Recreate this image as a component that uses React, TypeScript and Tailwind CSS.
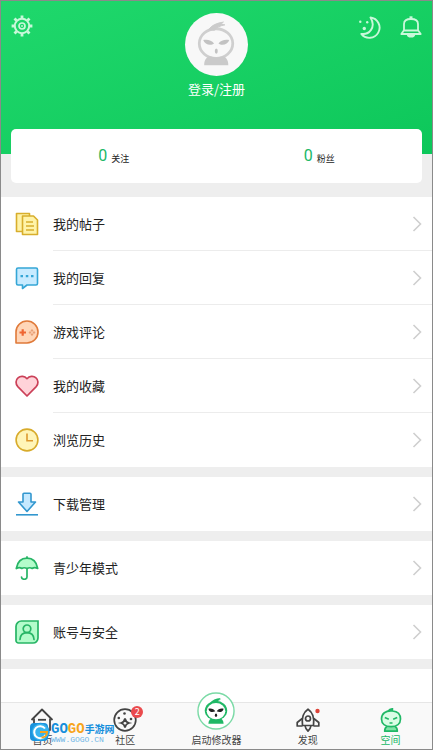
import type { ReactNode } from "react";

interface MenuItem {
  label: string;
  icon: ReactNode;
}

const GearIcon = () => (
  <svg viewBox="0 0 22 22" className="size-[22px]" fill="none" stroke="currentColor">
    <circle cx="11" cy="11" r="7.2" strokeWidth="2" />
    <circle cx="11" cy="11" r="3" strokeWidth="1.7" />
    <circle cx="11" cy="11" r="0.9" fill="currentColor" stroke="none" />
    <path
      d="M11 .6v3M11 18.4v3M.6 11h3M18.4 11h3M3.500 3.500l2 2M16.500 16.500l2 2M3.500 18.500l2-2M16.500 5.500l2-2"
      strokeWidth="2.800"
    />
  </svg>
);

const MoonIcon = () => (
  <svg viewBox="0 0 24 24" className="size-6" fill="none" stroke="currentColor">
    <path
      d="M12.500 2.500A10.200 10.200 0 1 1 3.300 18.900C11 20 18.500 12.500 12.500 2.500z"
      strokeWidth="1.900"
      strokeLinejoin="round"
    />
    <g fill="currentColor" stroke="none">
      <circle cx="2.300" cy="6.700" r="1.200" />
      <circle cx="9.200" cy="7.200" r="1.200" />
      <circle cx="6.300" cy="13.500" r="1.700" />
    </g>
  </svg>
);

const BellIcon = () => (
  <svg viewBox="0 0 22 22" className="size-[22px]" fill="none" stroke="currentColor" strokeWidth="1.800" strokeLinejoin="round">
    <path d="M4 15V8C4 4.800 6.500 3 11 3s7 1.800 7 5v7" />
    <path d="M3.800 14.500l-2.500 3.500h19.400l-2.500-3.500z" />
    <path d="M11 .3V3" strokeWidth="3" />
    <path d="M6.800 18.200a4.200 3.400 0 0 0 8.400 0z" fill="currentColor" stroke="none" />
  </svg>
);

const AvatarFace = () => (
  <svg viewBox="0 0 64 64" className="size-full" fill="none">
    <ellipse cx="31.500" cy="31" rx="17" ry="15" stroke="#cfcfcf" strokeWidth="2.800" />
    <path d="M24 17c3-4.500 8-6.800 15-7.800l-2.500 2.300 4 .5c-5 1-8.500 2.800-10.500 5.500z" fill="#cbcbcb" stroke="#cbcbcb" />
    <path d="M18.500 27.500c4-1 8.500 0 11 3.500-3 2.300-9.500 1.500-11-3.500zM45 27.500c-4-1-8.500 0-11 3.500 3 2.300 9.500 1.500 11-3.500z" fill="#c2c2c2" />
    <ellipse cx="31.800" cy="38.700" rx="1.500" ry="2.700" fill="#c2c2c2" />
    <path d="M19.500 53c0-5 2-8 5.500-9 4.500 1.500 9 1.500 13.500 0 3.500 1 5.500 4 5.500 9z" fill="#cacaca" />
  </svg>
);

const PostsIcon = () => (
  <svg viewBox="0 0 24 24" className="size-6" fill="#fff3a8" stroke="#d8ae2c" strokeWidth="1.600" strokeLinejoin="round">
    <path d="M1.500 1.500h13v18h-13z" />
    <path d="M7.500 4h11l4 4v14.500h-15z" />
    <path d="M11 10h7M11 14h8M11 18h8" />
  </svg>
);

const ReplyIcon = () => (
  <svg viewBox="0 0 24 24" className="size-6" stroke="#35a6d6" strokeWidth="1.600" strokeLinejoin="round">
    <path d="M3 2h18a1.500 1.500 0 0 1 1.500 1.500v14A1.500 1.500 0 0 1 21 19H12l-4.500 3.500V19H3a1.500 1.500 0 0 1-1.500-1.500v-14A1.500 1.500 0 0 1 3 2z" fill="#c8ebff" />
    <path d="M5.500 10.200h2.500M10.800 10.200h2.500M16 10.200h2.500" strokeWidth="2.200" />
  </svg>
);

const GameIcon = () => (
  <svg viewBox="0 0 24 24" className="size-6" fill="none" strokeLinejoin="round">
    <path d="M1 23V12A11 11 0 1 1 12 23z" fill="#ffd6b8" stroke="#e07a3a" strokeWidth="1.600" />
    <path d="M4.500 12.500h6.500M7.700 9.300v6.400" stroke="#ef6532" strokeWidth="2.200" />
    <path d="M17 9l1.500 1.500L17 12l-1.500-1.500zM17 13l1.500 1.500L17 16l-1.500-1.500zM15 11l1.500 1.500L15 14l-1.500-1.500zM19 11l1.500 1.500L19 14l-1.500-1.500z" fill="#e9a178" />
  </svg>
);

const HeartIcon = () => (
  <svg viewBox="0 0 24 24" className="size-6" fill="#ffd3d9" stroke="#cb4058" strokeWidth="1.700" strokeLinejoin="round">
    <path d="M12 22 2.800 12.600C.3 9.900.6 6 3 3.900 5.600 1.500 9.600 1.900 12 4.700c2.400-2.800 6.400-3.200 9-.8 2.400 2.100 2.700 6 .2 8.700z" />
  </svg>
);

const ClockIcon = () => (
  <svg viewBox="0 0 24 24" className="size-6" fill="none" stroke="#d8ab2b" strokeWidth="1.600">
    <circle cx="12" cy="12" r="10.900" fill="#fff5b8" />
    <path d="M12 5.500v7.300h6" stroke="#dd9a2e" />
  </svg>
);

const DownloadIcon = () => (
  <svg viewBox="0 0 24 24" className="size-6" fill="#c5e9ff" stroke="#3297cf" strokeWidth="1.600" strokeLinejoin="round">
    <path d="M9 1.200h6a1 1 0 0 1 1 1V10h4.500L12 19.500 3.500 10H8V2.200a1 1 0 0 1 1-1z" />
    <path d="M1 22.800h22" />
  </svg>
);

const UmbrellaIcon = () => (
  <svg viewBox="0 0 24 24" className="size-6" fill="none" stroke="#27b566" strokeWidth="1.700" strokeLinejoin="round" strokeLinecap="round">
    <path d="M1.300 12.500C2.500 5.500 6.500 2.200 12 2.200S21.500 5.500 22.700 12.500c-2-1.200-4-1.200-5.500 0-1.500-1-3.300-1-5.200 0-1.900-1-3.700-1-5.200 0-1.500-1.200-3.500-1.200-5.500 0z" fill="#b3fccb" />
    <path d="M12 .9v1.300M12 12.500v8.500c0 3-5.500 3-5.500 0" />
  </svg>
);

const AccountIcon = () => (
  <svg viewBox="0 0 24 24" className="size-6" fill="none" stroke="#27b566" strokeWidth="1.700" strokeLinecap="round">
    <path d="M6.500 1H23v17a5 5 0 0 1-5 5H3.500A2.500 2.500 0 0 1 1 20.500v-14A5.500 5.500 0 0 1 6.500 1z" fill="#b3fccb" />
    <circle cx="12" cy="8.800" r="3.800" />
    <path d="M5 19.500c.2-4.400 2.400-6.900 7-6.900s6.800 2.500 7 6.900" />
  </svg>
);

const HomeIcon = () => (
  <svg viewBox="0 0 24 24" className="size-6" fill="none" stroke="currentColor" strokeWidth="1.800" strokeLinejoin="round">
    <path d="M4 10.500V22h16V10.500" />
    <path d="M1.500 12 12 1.500 22.500 12" />
    <path d="M8 11.800h8" />
  </svg>
);

const CommunityIcon = () => (
  <svg viewBox="0 0 24 24" className="size-6" fill="none" stroke="currentColor" strokeWidth="1.700">
    <circle cx="12" cy="12" r="10.800" />
    <path d="M12 10.500c.6 3 1.300 3.800 4 4.500-2.700.7-3.400 1.500-4 4.500-.6-3-1.300-3.800-4-4.500 2.700-.7 3.400-1.500 4-4.500z" />
    <g fill="currentColor" stroke="none">
      <circle cx="5.800" cy="10" r="1.300" />
      <circle cx="11.500" cy="5.500" r="1.300" />
      <circle cx="18" cy="11" r="1.300" />
    </g>
  </svg>
);

const RocketIcon = () => (
  <svg viewBox="0 0 24 24" className="size-6" fill="none" stroke="currentColor" strokeWidth="1.700" strokeLinejoin="round">
    <path d="M6.500 17.500c-1-7 .5-13 5.500-16.300 5 3.300 6.500 9.300 5.500 16.300z" />
    <circle cx="12" cy="10.500" r="2.500" />
    <path d="M6.200 10.500 1.200 14.500v3.500h5.300M17.800 10.500l5 4v3.500h-5.300" />
    <path d="M9 17.500c.3 2.300 1.200 4 3 5.700 1.800-1.700 2.700-3.400 3-5.700" />
    <circle cx="21.500" cy="3" r="2.200" fill="#dd4338" stroke="none" />
  </svg>
);

const SpaceIcon = () => (
  <svg viewBox="0 0 24 24" className="size-6" fill="none" stroke="currentColor" strokeWidth="1.700" strokeLinejoin="round">
    <path d="M8 18.500c-1.500.8-2.300 2.500-2.300 4.700h12.600c0-2.200-.8-3.900-2.300-4.700" fill="#7fe3a6" />
    <path d="M13.500 3C6.500 2.300 2.500 5.800 2.500 11c0 4.800 3.700 7.700 9.500 7.700s9.500-2.900 9.500-7.700C21.500 7 19 3.500 13.500 3z" fill="#d9fde5" />
    <path d="M9 3.200C10 2 11.500 1 13.500.8L13 3" />
    <path d="M5.800 9.500l4 1.700M18.200 9.500l-4 1.700M10.500 15h3" />
  </svg>
);

const LauncherIcon = () => (
  <svg viewBox="0 0 40 40" className="size-[38px]">
    <circle cx="20" cy="20" r="19" fill="#fff" stroke="#7bdaa6" strokeWidth="1.500" />
    <path d="M12 33.500c0-3.800 2-6 4.500-6.500h7c2.500.5 4.500 2.700 4.500 6.500z" fill="#20b866" />
    <ellipse cx="20" cy="19.500" rx="11.800" ry="10.200" fill="#20b866" />
    <path d="M14 11.500c2-3 5.500-5 11-5.300l-1.500 1.600 2 .4c-3 .6-4.500 1.800-5.500 3.800z" fill="#20b866" />
    <ellipse cx="20" cy="20.200" rx="9.800" ry="8.500" fill="#fff" />
    <path d="M12 17.500c3-.8 6 .3 7.300 2.800-3.300 1.700-6.800.5-7.300-2.800zM28 17.500c-3-.8-6 .3-7.300 2.800 3.300 1.700 6.800.5 7.300-2.800z" fill="#222" />
    <ellipse cx="20" cy="24.500" rx="1.200" ry="1.900" fill="#222" />
  </svg>
);

const ChevronIcon = () => (
  <svg viewBox="0 0 10 16" className="h-4 w-2.5" fill="none" stroke="#cfcfcf" strokeWidth="1.600">
    <path d="M1.500 1 8.500 8l-7 7" />
  </svg>
);

const menuGroups: MenuItem[][] = [
  [
    { label: "我的帖子", icon: <PostsIcon /> },
    { label: "我的回复", icon: <ReplyIcon /> },
    { label: "游戏评论", icon: <GameIcon /> },
    { label: "我的收藏", icon: <HeartIcon /> },
    { label: "浏览历史", icon: <ClockIcon /> },
  ],
  [{ label: "下载管理", icon: <DownloadIcon /> }],
  [{ label: "青少年模式", icon: <UmbrellaIcon /> }],
  [{ label: "账号与安全", icon: <AccountIcon /> }],
];

const stats = [
  { label: "关注", value: 0 },
  { label: "粉丝", value: 0 },
];

const MenuRow = ({ item, divided }: { item: MenuItem; divided: boolean }) => (
  <li>
    <a href="#" className="flex h-[54px] items-center gap-3.5 pl-3.5">
      {item.icon}
      <span className={`flex h-full flex-1 items-center justify-between pr-2.5 ${divided ? "border-b border-[#ececec]" : ""}`}>
        <span className="text-[13px] text-[#222]">{item.label}</span>
        <ChevronIcon />
      </span>
    </a>
  </li>
);

interface TabProps {
  label: string;
  icon: ReactNode;
  active?: boolean;
  badge?: number;
}

const Tab = ({ label, icon, active, badge }: TabProps) => (
  <a
    href="#"
    className={`flex flex-col items-center justify-end gap-0.5 ${active ? "text-[#20b866]" : "text-[#444]"}`}
  >
    <span className="relative">
      {icon}
      {badge && (
        <span className="absolute -top-0.5 -right-1.5 flex size-3 items-center justify-center rounded-full bg-[#ea4a4d] text-[9px] leading-3 text-white">
          {badge}
        </span>
      )}
    </span>
    <span className="text-[10px] leading-3">{label}</span>
  </a>
);

const Watermark = () => (
  <div className="pointer-events-none absolute bottom-1.5 left-7 flex items-center">
    <svg viewBox="0 0 22 22" className="size-[22px]">
      <rect x="1" y="2" width="18" height="18" rx="4" fill="#1a93dd" />
      <circle cx="11.500" cy="11" r="8.800" fill="#37b4ee" stroke="#1a93dd" strokeWidth="0.800" />
      <path d="M16 7.500A6 6 0 1 0 16.500 14" fill="none" stroke="#fff" strokeWidth="2" />
      <path d="M11 11h7c0 3.500-2.500 5.500-5.500 5.500" fill="none" stroke="#f6a51e" strokeWidth="2" />
    </svg>
    <div className="flex flex-col">
      <p className="flex items-center font-bold text-[#168fdc]">
        <span className="font-['Liberation_Mono',monospace] text-[14px] leading-4">GO</span>
        <span className="font-['Liberation_Mono',monospace] text-[14px] leading-4 text-[#f7a51c]">GO</span>
        <span className="text-[10px] leading-4">手游网</span>
      </p>
      <p className="font-['Liberation_Mono',monospace] text-[8px] leading-[6px] text-[#6fb6e6]">WWW.GOGO.CN</p>
    </div>
  </div>
);

const App = () => {
  return (
    <div className="relative flex min-h-screen flex-col border border-[#8a8a8a] bg-[#eeeeee] font-['Noto_Sans_CJK_SC',sans-serif]">
      <header className="flex items-start justify-between bg-linear-to-br from-[#1fd86c] to-[#0cc75a] px-2.5 pt-3 pb-14 text-white">
        <div className="flex flex-1 pt-0.5 text-[#c9f8da]">
          <button type="button" aria-label="设置">
            <GearIcon />
          </button>
        </div>
        <a href="#" className="flex flex-col items-center gap-1 text-[13px] leading-[18px]">
          <span className="size-[63px] rounded-full bg-[#f8f8f8]">
            <AvatarFace />
          </span>
          登录/注册
        </a>
        <div className="flex flex-1 items-center justify-end gap-[18px] pt-0.5 text-[#c9f8da]">
          <button type="button" aria-label="夜间模式">
            <MoonIcon />
          </button>
          <button type="button" aria-label="消息">
            <BellIcon />
          </button>
        </div>
      </header>

      <section className="mx-2.5 -mt-[25px] mb-3.5 grid h-[54px] grid-cols-2 rounded-[5px] bg-white">
        {stats.map((stat) => (
          <a key={stat.label} href="#" className="flex items-center justify-center gap-1">
            <span className="font-[Roboto,sans-serif] text-[16px] text-[#20b866]">{stat.value}</span>
            <span className="pt-1.5 text-[9px] text-[#222]">{stat.label}</span>
          </a>
        ))}
      </section>

      <main className="flex flex-1 flex-col gap-2.5">
        {menuGroups.map((group) => (
          <ul key={group[0].label} className="bg-white">
            {group.map((item, index) => (
              <MenuRow key={item.label} item={item} divided={index < group.length - 1} />
            ))}
          </ul>
        ))}
        <div className="flex-1 bg-white" />
      </main>

      <nav className="grid grid-cols-[5fr_5fr_6fr_5fr_5fr] items-end border-t border-[#e6e6e6] bg-[#f9f9f9] pt-[5px] pb-[3px]">
        <Tab label="首页" icon={<HomeIcon />} />
        <Tab label="社区" icon={<CommunityIcon />} badge={2} />
        {/* The launcher button rises above the bar */}
        <div className="-mt-5 grid">
          <Tab label="启动修改器" icon={<span className="block pb-0.5"><LauncherIcon /></span>} />
        </div>
        <Tab label="发现" icon={<RocketIcon />} />
        <Tab label="空间" icon={<SpaceIcon />} active />
      </nav>

      <Watermark />
    </div>
  );
};

export default App;
